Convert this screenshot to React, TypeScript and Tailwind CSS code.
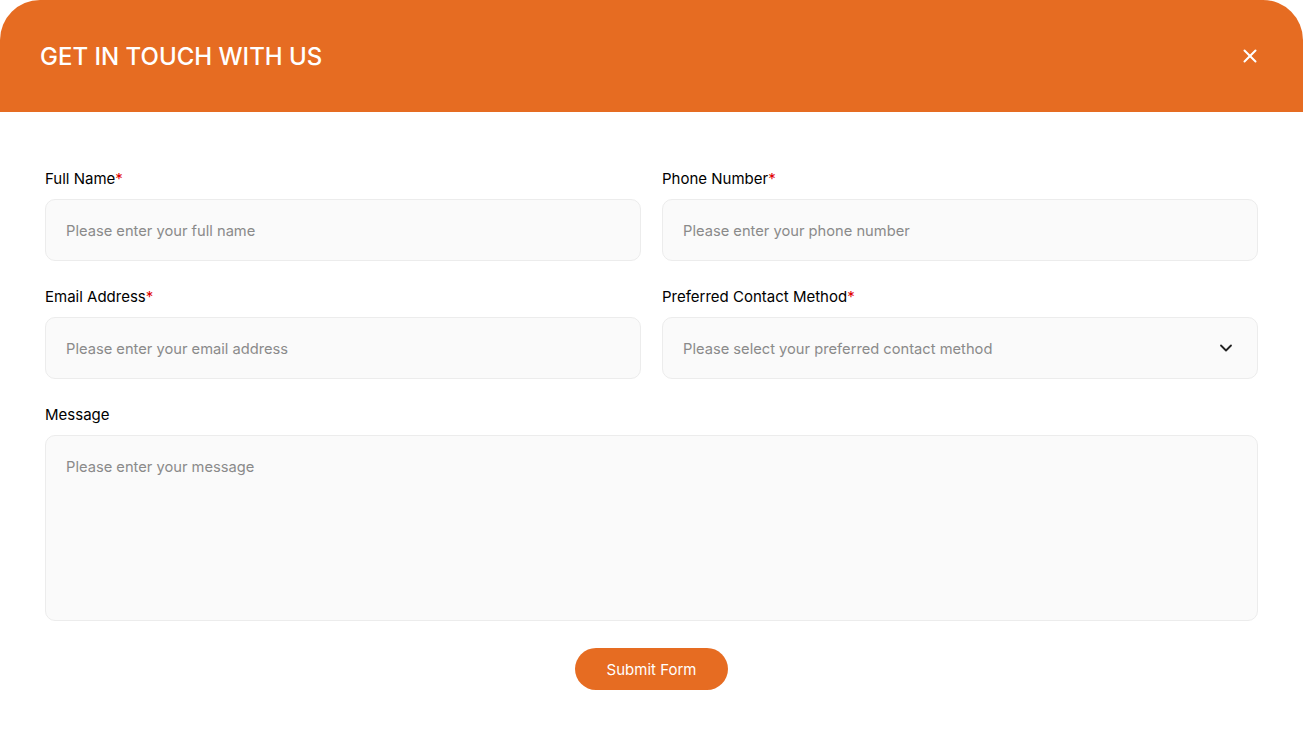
import { X, ChevronDown } from 'lucide-react';

const font = { fontFamily: 'Inter, "Noto Sans", sans-serif' };

function Label({ text, required }: { text: string; required?: boolean }) {
    return (
        <label className="block h-5 text-[15px] leading-[22px] text-black">
            {text}
            {required && <span className="text-[#e00000]">*</span>}
        </label>
    );
}

function Field({ label, placeholder, required }: { label: string; placeholder: string; required?: boolean }) {
    return (
        <div className="flex flex-col gap-[11px]">
            <Label text={label} required={required} />
            <input
                placeholder={placeholder}
                className="h-[62px] w-full rounded-[10px] border border-[#ececec] bg-[#fafafa] px-5 pt-[2px] text-[14.7px] text-black outline-none placeholder:text-[#8a8a8a]"
            />
        </div>
    );
}

export default function App() {
    return (
        <div className="min-h-[736px] w-full bg-white" style={font}>
            <div className="flex h-[112px] items-center justify-between rounded-t-[40px] bg-[#e66c22] pl-10 pr-[42px]">
                <h1 className="pt-[2px] text-[24px] font-medium text-white">GET IN TOUCH WITH US</h1>
                <button className="text-white">
                    <X size={22} strokeWidth={2.2} />
                </button>
            </div>

            <form className="flex flex-col px-[45px] pt-[56px]">
                <div className="grid grid-cols-2 gap-x-[21px] gap-y-[25px]">
                    <Field label="Full Name" placeholder="Please enter your full name" required />
                    <Field label="Phone Number" placeholder="Please enter your phone number" required />
                    <Field label="Email Address" placeholder="Please enter your email address" required />
                    <div className="flex flex-col gap-[11px]">
                        <Label text="Preferred Contact Method" required />
                        <div className="flex h-[62px] items-center justify-between rounded-[10px] border border-[#ececec] bg-[#fafafa] pl-5 pr-[21px]">
                            <span className="pt-[2px] text-[14.7px] text-[#8a8a8a]">Please select your preferred contact method</span>
                            <ChevronDown size={20} strokeWidth={2.2} className="text-[#222]" />
                        </div>
                    </div>
                </div>

                <div className="mt-[25px] flex flex-col gap-[11px]">
                    <Label text="Message" />
                    <textarea
                        placeholder="Please enter your message"
                        className="h-[186px] w-full resize-none rounded-[10px] border border-[#ececec] bg-[#fafafa] px-5 pt-[21px] text-[14.7px] leading-5 text-black outline-none placeholder:text-[#8a8a8a]"
                    />
                </div>

                <div className="mt-[27px] flex justify-center pb-[46px]">
                    <button
                        type="button"
                        className="h-[42px] w-[153px] rounded-full bg-[#e66c22] pt-[2px] text-[15px] text-white"
                    >
                        Submit Form
                    </button>
                </div>
            </form>
        </div>
    );
}
